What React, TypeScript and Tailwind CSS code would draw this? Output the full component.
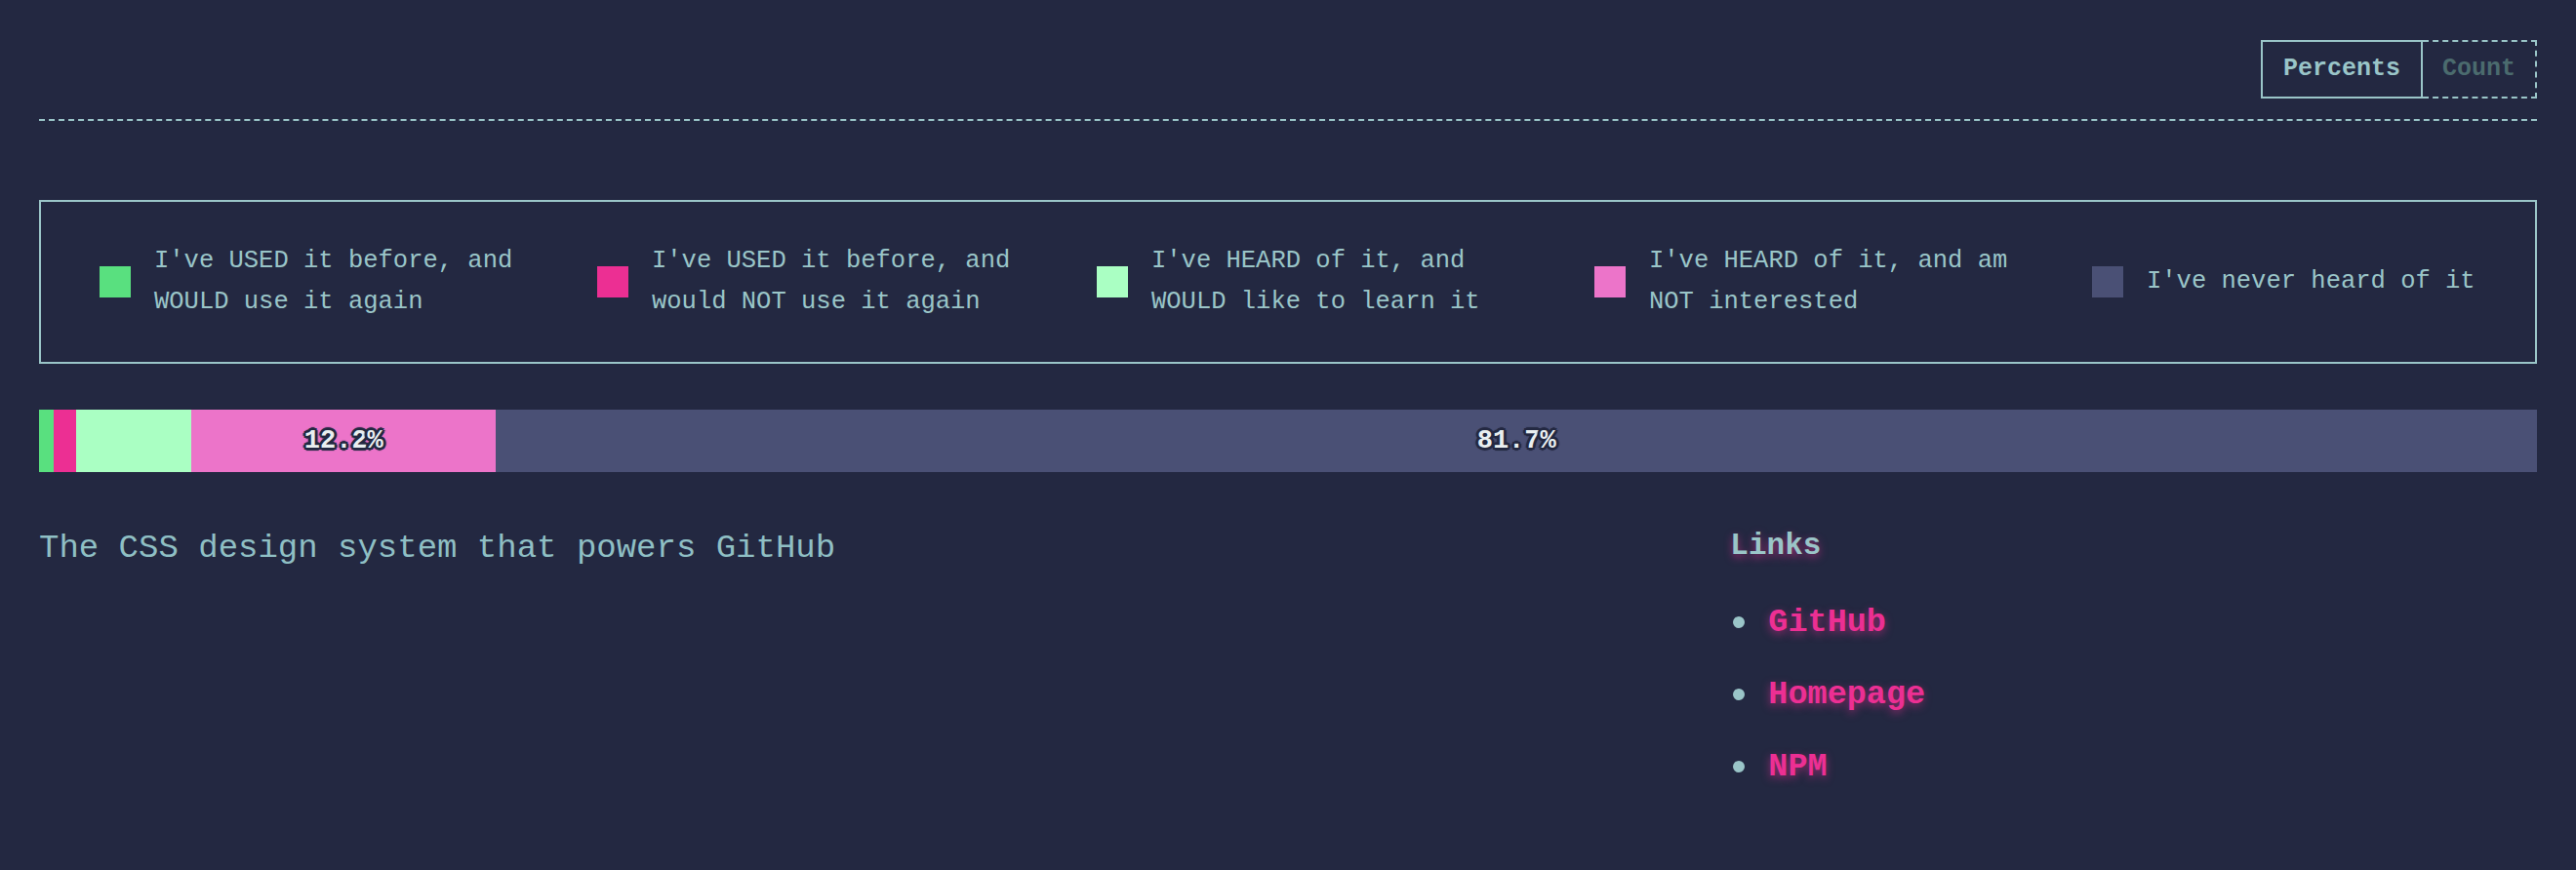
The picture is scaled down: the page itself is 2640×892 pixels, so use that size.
import React from "react";

const SEGMENTS = [
  { id: "would_use", label: "I've USED it before, and WOULD use it again", color: "bg-[#59e07f]", pct: 0.6 },
  { id: "would_not_use", label: "I've USED it before, and would NOT use it again", color: "bg-[#ec2f93]", pct: 0.9 },
  { id: "interested", label: "I've HEARD of it, and WOULD like to learn it", color: "bg-[#aaffc3]", pct: 4.6 },
  { id: "not_interested", label: "I've HEARD of it, and am NOT interested", color: "bg-[#ec74c9]", pct: 12.2 },
  { id: "never_heard", label: "I've never heard of it", color: "bg-[#4a5075]", pct: 81.7 },
];

const LINKS = ["GitHub", "Homepage", "NPM"];

const outline =
  "[text-shadow:2px_0_0_#232841,-2px_0_0_#232841,0_2px_0_#232841,0_-2px_0_#232841,2px_2px_0_#232841,-2px_-2px_0_#232841,2px_-2px_0_#232841,-2px_2px_0_#232841,3px_0_1px_#232841,-3px_0_1px_#232841,0_3px_1px_#232841,0_-3px_1px_#232841]";

export default function App() {
  return (
    <div className="min-h-[892px] bg-[#232841] px-[40px] pt-[41px] font-['Liberation_Mono',monospace] text-[#9ac5c8]">
      {/* header with units toggle */}
      <div className="flex justify-end">
        <button className="h-[60px] border-2 border-solid border-[#9ac5c8] px-[21px] text-[25px] font-bold text-[#9ac5c8]">
          Percents
        </button>
        <button className="h-[60px] border-2 border-l-0 border-dashed border-[#9ac5c8] px-[20px] text-[25px] font-bold text-[#4b6b6e]">
          Count
        </button>
      </div>
      <div className="mt-[21px] border-b-2 border-dashed border-[#9ac5c8]" />

      {/* legend */}
      <div className="mt-[81px] border-2 border-[#9ac5c8] py-[40px] pl-[60px]">
        <div className="grid grid-cols-[510px_512px_510px_510px_1fr]">
          {SEGMENTS.map((s) => (
            <div key={s.id} className="flex items-center gap-[24px]">
              <span className={`h-[32px] w-[32px] shrink-0 ${s.color}`} />
              <span className="w-[400px] text-[25.5px] leading-[42px]">{s.label}</span>
            </div>
          ))}
        </div>
      </div>

      {/* stacked bar */}
      <div className="mt-[47px] flex h-[64px] w-full">
        {SEGMENTS.map((s) => (
          <div
            key={s.id}
            className={`flex items-center justify-center ${s.color}`}
            style={{ width: `${s.pct}%` }}
          >
            {s.pct > 10 && (
              <span className={`text-[27px] font-bold text-[#e9eef0] ${outline}`}>{s.pct}%</span>
            )}
          </div>
        ))}
      </div>

      {/* description + links */}
      <div className="mt-[53px] grid grid-cols-3 gap-[40px]">
        <p className="col-span-2 text-[34px] leading-[51px] text-[#8fbfc4]">
          The CSS design system that powers GitHub
        </p>
        <div>
          <h2 className="text-[31px] font-bold leading-[45px] text-[#9ac5c8] [text-shadow:0_3px_8px_rgba(236,47,147,0.6)]">
            Links
          </h2>
          <ul className="mt-[31px] flex flex-col gap-[24px]">
            {LINKS.map((l) => (
              <li key={l} className="flex h-[50px] items-center gap-[24px]">
                <span className="ml-[3px] h-[12px] w-[12px] rounded-full bg-[#9ac5c8]" />
                <a className="text-[33.5px] font-bold text-[#ec2f93] [text-shadow:0_3px_8px_rgba(236,47,147,0.55)]">
                  {l}
                </a>
              </li>
            ))}
          </ul>
        </div>
      </div>
    </div>
  );
}
